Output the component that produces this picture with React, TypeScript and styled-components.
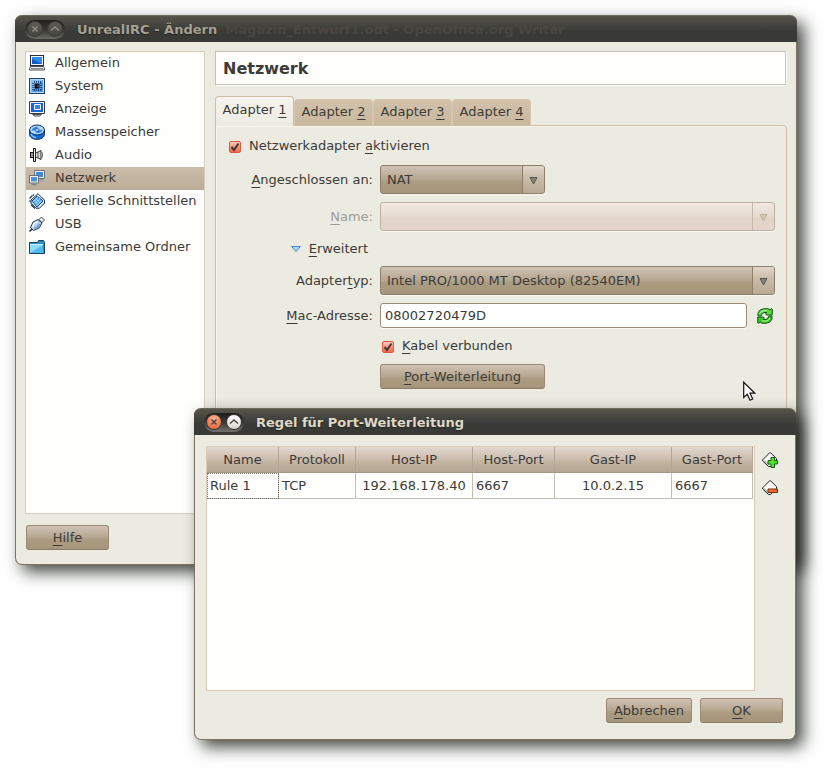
import React, { useState } from "react";
import styled, { createGlobalStyle, css } from "styled-components";

const GlobalStyle = createGlobalStyle`
  * { box-sizing: border-box; }
  body {
    margin: 0;
    background: #fdfefd;
    color: #3c3b37;
    font: 13px/19px "DejaVu Sans", "Liberation Sans", sans-serif;
  }
  button, input, select { font: inherit; color: inherit; margin: 0; }
`;

const raised = css`
  background: linear-gradient(#d0c3b4 0%, #c0b19f 30%, #b3a48e 52%, #ab9c82 56%, #a5957b 100%);
`;

const Desktop = styled.main`
  position: relative;
  min-height: 100vh;
  overflow: hidden;
  padding: 15px 31px 31px 15px;
`;

const WindowFrame = styled.section`
  border: 1px solid #7e7361;
  border-top: 0;
  border-radius: 7px;
  background: #ecebe2;
  box-shadow: 7px 7px 16px rgba(20, 24, 20, 0.78);
`;

const DialogFrame = styled(WindowFrame)`
  position: absolute;
  top: 408px;
  left: 194px;
  right: 32px;
`;

const TitleBar = styled.header<{ $active?: boolean }>`
  display: flex;
  align-items: center;
  height: 27px;
  margin: 0 -1px;
  padding: 0 10px;
  gap: 12px;
  overflow: hidden;
  white-space: nowrap;
  border-radius: 7px 7px 0 0;
  border-top: 1px solid #6c6a5d;
  background: linear-gradient(#55544b 0%, #3f403b 45%, #393a36 60%, #393a36 100%);
  color: ${(p) => (p.$active ? "#dfd8c8" : "#a3a095")};
`;

const Title = styled.h1`
  margin: 0;
  font-size: 13px;
  line-height: 19px;
  font-weight: bold;
  text-shadow: 0 1px 1px #24241f;
`;

const TitleGhost = styled.span`
  color: #4a4742;
  margin-left: 8px;
  text-shadow: none;
`;

const Caps = styled.div<{ $active?: boolean }>`
  display: flex;
  align-items: center;
  justify-content: space-between;
  width: 40px;
  height: 19px;
  padding: 0 2px;
  border-radius: 10px;
  background: ${(p) =>
    p.$active ? "linear-gradient(#1c1c1a, #3a3a37 50%, #70706c)" : "linear-gradient(#20201d, #363632 50%, #6a6a64)"};
`;

const CapButton = styled.button<{ $tone: "close" | "light" | "dim" }>`
  display: grid;
  place-items: center;
  width: 16px;
  height: 16px;
  padding: 0;
  border: 1px solid #3b3a36;
  border-radius: 50%;
  color: ${(p) => (p.$tone === "dim" ? "#8e8d86" : "#4c4841")};
  background: ${(p) =>
    p.$tone === "close"
      ? "radial-gradient(circle at 50% 25%, #f9b396, #f07a50 60%, #d96038)"
      : p.$tone === "light"
        ? "linear-gradient(#ffffff, #d6d3ca)"
        : "linear-gradient(#5d5c56, #45443f)"};
`;

const MainBody = styled.div`
  display: grid;
  grid-template-columns: 180px minmax(0, 1fr);
  column-gap: 10px;
  row-gap: 11px;
  padding: 9px 9px 14px;
`;

const Categories = styled.ul`
  margin: 0;
  padding: 0;
  min-height: 463px;
  list-style: none;
  background: #fefefd;
  border: 1px solid #d8cdb9;
`;

const Category = styled.button<{ $selected: boolean }>`
  display: flex;
  align-items: center;
  gap: 10px;
  width: 100%;
  height: 23px;
  padding: 0 3px 2px;
  border: 0;
  text-align: left;
  white-space: nowrap;
  background: ${(p) => (p.$selected ? "linear-gradient(#ccbdab, #c3b4a1 50%, #bcad99)" : "transparent")};
`;

const Settings = styled.div`
  display: flex;
  flex-direction: column;
`;

const Heading = styled.h2`
  margin: 0 1px 11px 0;
  padding: 2px 7px 0;
  font-size: 16px;
  line-height: 30px;
  font-weight: bold;
  background: #fefefd;
  border: 1px solid #c1c0b4;
  box-shadow: 1px 1px 0 #ffffff;
`;

const Tabs = styled.div`
  display: flex;
  align-items: flex-end;
  height: 29px;
`;

const Tab = styled.button<{ $selected: boolean }>`
  width: 79px;
  height: ${(p) => (p.$selected ? "30px" : "26px")};
  margin-bottom: ${(p) => (p.$selected ? "-1px" : "0")};
  padding: ${(p) => (p.$selected ? "0 0 4px" : "0 0 2px")};
  position: relative;
  white-space: nowrap;
  border: 1px solid ${(p) => (p.$selected ? "#cdbda4" : "#d6c7b1")};
  border-bottom: 0;
  border-radius: 4px 4px 0 0;
  background: ${(p) => (p.$selected ? "linear-gradient(#f7f3ee, #ecebe2)" : "linear-gradient(#d2c2ac, #c9b89e)")};
`;

const Panel = styled.div`
  display: flex;
  flex: 1;
  flex-direction: column;
  gap: 9px;
  padding: 10px 11px 11px 13px;
  border: 1px solid #cdbda4;
  border-radius: 0 4px 0 0;
  box-shadow: inset 1px 1px 0 #f8f6f0;
`;

const Form = styled.div`
  display: grid;
  grid-template-columns: 144px minmax(0, 1fr);
  column-gap: 7px;
  row-gap: 8px;
  align-items: center;
`;

const FieldLabel = styled.label<{ $disabled?: boolean }>`
  text-align: right;
  color: ${(p) => (p.$disabled ? "#a09c93" : "inherit")};
`;

const Key = styled.span`
  text-decoration: underline 1px;
  text-decoration-skip-ink: none;
  text-underline-offset: 3px;
`;

const SelectBox = styled.div<{ $disabled?: boolean; $short?: boolean }>`
  display: grid;
  grid-template-columns: minmax(0, 1fr) 22px;
  width: ${(p) => (p.$short ? "165px" : "100%")};
  height: 29px;
  border: 1px solid ${(p) => (p.$disabled ? "#bfb09f" : "#8d7e6a")};
  border-radius: 3px;
  overflow: hidden;
  box-shadow: 0 1px 0 #f8f7f2;
  ${raised}
  ${(p) => p.$disabled && "background: linear-gradient(#efe8e1, #e8ddd3 45%, #e2d6cb 55%, #e1d5c9);"}
`;

const Select = styled.select`
  grid-area: 1 / 1 / 2 / 3;
  appearance: none;
  border: 0;
  padding: 0 28px 0 6px;
  background: transparent;
`;

const SelectArrow = styled.span<{ $disabled?: boolean }>`
  grid-area: 1 / 2;
  display: grid;
  place-items: center;
  padding-top: 2px;
  pointer-events: none;
  border-left: 1px solid ${(p) => (p.$disabled ? "#c5b7a7" : "#8d7e6a")};
  background: ${(p) => (p.$disabled ? "transparent" : "linear-gradient(#e0d6cb, #c8bba9 45%, #b9aa95)")};
`;

const Disclosure = styled.button`
  display: flex;
  justify-content: flex-end;
  align-items: center;
  gap: 8px;
  height: 19px;
  padding: 0 5px 0 0;
  border: 0;
  background: none;
`;

const MacRow = styled.div`
  grid-column: 2;
  display: grid;
  grid-template-columns: minmax(0, 1fr) 20px;
  gap: 8px;
  align-items: center;
`;

const TextInput = styled.input`
  width: 100%;
  height: 25px;
  padding: 0 4px;
  background: #ffffff;
  border: 1px solid #9c8b74;
  border-radius: 3px;
  box-shadow: 0 1px 0 #f8f7f2;
`;

const ToolButton = styled.button<{ $size: number }>`
  display: grid;
  place-items: center;
  width: ${(p) => p.$size}px;
  height: ${(p) => p.$size}px;
  padding: 0;
  border: 0;
  background: none;
`;

const CheckLabel = styled.label<{ $field?: boolean }>`
  grid-column: ${(p) => (p.$field ? 2 : "auto")};
  display: flex;
  align-items: center;
  gap: 8px;
  height: 20px;
  padding-left: ${(p) => (p.$field ? "2px" : "0")};
  padding-bottom: 1px;
`;

const CheckMark = styled.span`
  display: grid;
  width: 12px;
  height: 12px;
  margin-top: 2px;
  > * { grid-area: 1 / 1; }
`;

const CheckInput = styled.input`
  appearance: none;
  width: 12px;
  height: 12px;
  border: 1px solid #e2593f;
  border-radius: 2px;
  background: linear-gradient(#fbc9ba, #f58a72 60%, #f2694d);
  &:not(:checked) { background: #ffffff; }
  &:not(:checked) + svg { visibility: hidden; }
`;

const PushButton = styled.button<{ $width: number }>`
  min-width: ${(p) => p.$width}px;
  height: 25px;
  padding: 0 6px;
  border: 1px solid #9a8975;
  border-bottom-color: #8b7c68;
  border-radius: 3px;
  justify-self: start;
  ${raised}
`;

const FieldButton = styled(PushButton)`
  grid-column: 2;
`;

const MainActions = styled.footer`
  grid-column: 1 / -1;
  display: flex;
  padding-left: 1px;
`;

const DialogBody = styled.div`
  display: grid;
  grid-template-columns: minmax(0, 1fr) 25px;
  column-gap: 3px;
  row-gap: 7px;
  padding: 11px 12px 16px 11px;
`;

const TableFrame = styled.div`
  min-height: 245px;
  padding-right: 1px;
  background: #fefefd;
  border: 1px solid #dccbb4;
`;

const RuleTable = styled.table`
  width: 100%;
  table-layout: fixed;
  border-collapse: separate;
  border-spacing: 0;
  white-space: nowrap;
`;

const HeadCell = styled.th`
  height: 26px;
  padding: 0;
  font-weight: normal;
  background: linear-gradient(#e2d8cf, #cdbfb1 45%, #c2b3a2 60%, #b6a694);
  border-right: 1px solid #b3a595;
  border-bottom: 1px solid #a59683;
`;

const Cell = styled.td<{ $center?: boolean; $focus?: boolean }>`
  height: 26px;
  padding: 0 3px 1px;
  text-align: ${(p) => (p.$center ? "center" : "left")};
  border-right: 1px solid #c1c0b4;
  border-bottom: 1px solid #c1c0b4;
  ${(p) => p.$focus && "outline: 1px dotted #77746c; outline-offset: -1px;"}
`;

const SideTools = styled.div`
  display: flex;
  flex-direction: column;
  gap: 4px;
  padding-top: 2px;
`;

const DialogActions = styled.footer`
  grid-column: 1 / -1;
  display: flex;
  justify-content: flex-end;
  gap: 8px;
`;

const Pointer = styled.svg`
  position: absolute;
  top: 381px;
  right: 72px;
  pointer-events: none;
`;

const Svg = ({ children }: { children: React.ReactNode }) => (
  <svg width="16" height="16" viewBox="0 0 16 16" aria-hidden="true">
    {children}
  </svg>
);

const GeneralIcon = () => (
  <Svg>
    <rect x="1.5" y=".5" width="13" height="10" fill="#f0f5fb" stroke="#26303c" />
    <rect x="3" y="2" width="10" height="7" fill="#2f8bec" />
    <path d="M3 9V4l10 5z" fill="#1059c4" />
    <path d="M1.500 11.500h13l1 2v1.500H.5v-1.500z" fill="#ececea" stroke="#4a4f55" />
    <path d="M2 13.500h12" stroke="#888" />
  </Svg>
);

const SystemIcon = () => (
  <Svg>
    <rect x=".5" y=".5" width="15" height="15" fill="#b4d8fa" stroke="#24405f" />
    <rect x="2" y="2" width="12" height="12" fill="#4c9bef" />
    <path d="M2 2h12L2 14z" fill="#86c0f8" />
    <rect x="5.500" y="5.500" width="5" height="5" fill="#0a101c" />
    <path d="M5 4h7M5 12h7M4 5v7M12 5v7" stroke="#0c2750" strokeWidth="1.300" strokeDasharray="1 1" />
    <path d="M8.500 7.500h1v1h-1z" fill="#e8f2ff" />
  </Svg>
);

const DisplayIcon = () => (
  <Svg>
    <path d="M.5.5h15v12H.5z" fill="#eef3f8" stroke="#333c46" />
    <rect x="2" y="2" width="12" height="9" fill="#1763cf" />
    <path d="M5.500 3.500h6v5h-6z" fill="#2f86ea" stroke="#f2f8ff" />
    <path d="M3.500 13.500h9l-2 1.500h-5z" fill="#cfcfcb" stroke="#50565c" />
  </Svg>
);

const StorageIcon = () => (
  <Svg>
    <path d="M.6 6v4.500c0 2.500 3.200 4.900 7.400 4.900s7.400-2.400 7.400-4.900V6z" fill="#146ad3" stroke="#0d2c58" />
    <path d="M2 10c1 2 3 3.500 5 3.800" stroke="#79c0f8" strokeWidth="1.500" fill="none" />
    <ellipse cx="8" cy="6" rx="7.400" ry="5" fill="#a8dafc" stroke="#0d2c58" />
    <path d="M2.500 7C3 4 6 2.500 9 2.800L8 5M13.500 5.500C13 8 11 9.500 7 9.300L8 7" fill="#2f86e3" />
    <ellipse cx="8" cy="6" rx="2.200" ry="1.300" fill="#f2faff" stroke="#1555a8" />
  </Svg>
);

const AudioIcon = () => (
  <Svg>
    <rect x="1.500" y="5.500" width="3" height="5" fill="#9a9a98" stroke="#1c1c1c" />
    <path d="M4.500 1.500h2v13h-2z" fill="#f2f2ee" stroke="#151515" />
    <path d="M6.500 6L9 5l3-1.500v9L9 11l-2.500-1z" fill="#d5d5d1" stroke="#343434" />
    <path d="M9 5v6" stroke="#5e5e5b" />
    <path d="M12.500 4.500c1.300 1.500 1.300 5.500 0 7" fill="none" stroke="#6b6b68" />
  </Svg>
);

const NetworkIcon = () => (
  <Svg>
    <path d="M5.500.5h10v8h-10z" fill="#f1f1ed" stroke="#6a7074" />
    <path d="M7 2h7v5H7z" fill="#3c8ae0" />
    <path d="M11 9.500h3v1.500h-3z" fill="#ddd" stroke="#7b7b78" strokeWidth=".7" />
    <path d="M.5 5.500h9v7.500h-9z" fill="#f5f5f2" stroke="#6a7074" />
    <path d="M2 7h6v4.500H2z" fill="#4c91dc" />
    <path d="M2.500 14.500h5" stroke="#85857f" strokeWidth="1.500" />
  </Svg>
);

const SerialIcon = () => (
  <Svg>
    <path d="M9 .7l6.500 6.500v3l-5 5H7l-5-5V7z" fill="#d9eefe" stroke="#152f4c" />
    <path d="M8 3l6 5-6 6-5-6z" fill="#5fb2f0" stroke="#114377" />
    <path d="M4 8.500L9 3.500M6 10.500L11 5.500M8 12.500L13 7.500" stroke="#e2f5ff" strokeDasharray="2 1" />
    <path d="M.5 5.500l3-3M.5 8.500l1-1M2 11.500l4 4M4 1.500l1 1" stroke="#1d3857" strokeWidth="1.300" />
  </Svg>
);

const UsbIcon = () => (
  <Svg>
    <path d="M10 3.500L12.500 1l3 3L13 6.500z" fill="#f4f4f2" stroke="#39424f" />
    <path d="M9 3.500L4 6 1.500 11.500l3 3L10 12l3-5z" fill="#b7ccf1" stroke="#26364f" />
    <path d="M8.500 5.500L5 7.500 3.500 11" stroke="#f3f8ff" strokeWidth="1.500" fill="none" />
    <path d="M10.500 8L8.500 11l-3 1.500" stroke="#6f95d8" strokeWidth="1.500" fill="none" />
    <path d="M3 13L.5 15.500" stroke="#26364f" strokeWidth="1.600" />
  </Svg>
);

const FolderIcon = () => (
  <Svg>
    <path d="M.5 3.500h8l1-2h5l1 2v11H.5z" fill="#2b8fc9" stroke="#17405e" />
    <path d="M1 5h13v9H1z" fill="#8fdbfa" />
    <path d="M1 14L14 6v8z" fill="#4fb8ec" />
    <path d="M1 5.500h13" stroke="#c8f0ff" />
  </Svg>
);

const RefreshIcon = () => (
  <Svg>
    <path
      d="M1 8V5l2-3 4-1.300h4L13 2l1-1.300 1.300.5V7H9.500L8.700 5.500 10 4.500H7L5 6 4 8z"
      fill="#58d83a"
      stroke="#14591a"
    />
    <path
      d="M15 8v3l-2 3-4 1.300H5L3 14l-1 1.300-1.300-.5V9h5.800l.8 1.500L6 11.500h3l2-1.500 1-2z"
      fill="#36c81c"
      stroke="#14591a"
    />
    <path d="M2.500 5.500L5 3l5-.7M5 13h5l3-2.500" stroke="#c6f7b4" fill="none" />
  </Svg>
);

const RuleIcon = ({ kind }: { kind: "add" | "remove" }) => (
  <Svg>
    <path d="M8.500.7L14.500 6.700v2L8.500 14.500H6.500L.7 9V7.800L7.700.7z" fill="#fafaf8" stroke="#1d1d1b" />
    <path d="M2 8.500L7 13" stroke="#b5b5b0" strokeWidth="1.500" />
    {kind === "add" ? (
      <path d="M9 5.500h3.500v3h3V12h-3v3.500H9V12H6V8.500h3z" fill="#4fe32b" stroke="#125d10" />
    ) : (
      <path d="M6 9h9.500v3.500H6z" fill="#f4682f" stroke="#7c2a12" />
    )}
  </Svg>
);

const CloseGlyph = () => (
  <svg width="8" height="8" viewBox="0 0 8 8" aria-hidden="true">
    <path d="M1.500 1.500l5 5M6.500 1.500l-5 5" stroke="currentColor" strokeWidth="1.500" />
  </svg>
);

const UpGlyph = () => (
  <svg width="10" height="8" viewBox="0 0 10 8" aria-hidden="true">
    <path d="M1 5.500L5 2l4 3.500" fill="none" stroke="currentColor" strokeWidth="1.500" />
  </svg>
);

const WindowCaps = ({ active }: { active?: boolean }) => (
  <Caps $active={active}>
    <CapButton $tone={active ? "close" : "dim"} aria-label="Schließen">
      <CloseGlyph />
    </CapButton>
    <CapButton $tone={active ? "light" : "dim"} aria-label="Einrollen">
      <UpGlyph />
    </CapButton>
  </Caps>
);

type DropDownProps = { id: string; options: string[]; disabled?: boolean; short?: boolean };

const DropDown = ({ id, options, disabled, short }: DropDownProps) => (
  <SelectBox $disabled={disabled} $short={short}>
    <Select id={id} disabled={disabled}>
      {options.map((o) => (
        <option key={o}>{o}</option>
      ))}
    </Select>
    <SelectArrow $disabled={disabled}>
      <svg width="9" height="9" viewBox="0 0 9 9" aria-hidden="true">
        <path
          d="M1 1.500h7L4.500 8z"
          fill={disabled ? "#d5c9b4" : "#85827a"}
          stroke={disabled ? "#bcae98" : "#55534c"}
        />
      </svg>
    </SelectArrow>
  </SelectBox>
);

const CheckBox = ({ field, children }: { field?: boolean; children: React.ReactNode }) => (
  <CheckLabel $field={field}>
    <CheckMark>
      <CheckInput type="checkbox" defaultChecked />
      <svg width="12" height="12" viewBox="0 0 12 12" pointerEvents="none" aria-hidden="true">
        <path d="M2.500 6l2.500 3 4.500-6.500" fill="none" stroke="#403a35" strokeWidth="2" />
      </svg>
    </CheckMark>
    <span>{children}</span>
  </CheckLabel>
);

const categories = [
  { name: "Allgemein", Icon: GeneralIcon },
  { name: "System", Icon: SystemIcon },
  { name: "Anzeige", Icon: DisplayIcon },
  { name: "Massenspeicher", Icon: StorageIcon },
  { name: "Audio", Icon: AudioIcon },
  { name: "Netzwerk", Icon: NetworkIcon },
  { name: "Serielle Schnittstellen", Icon: SerialIcon },
  { name: "USB", Icon: UsbIcon },
  { name: "Gemeinsame Ordner", Icon: FolderIcon },
];

const columns = [
  { name: "Name", width: 72, value: "Rule 1" },
  { name: "Protokoll", width: 77, value: "TCP" },
  { name: "Host-IP", width: 117, value: "192.168.178.40", center: true },
  { name: "Host-Port", width: 82, value: "6667" },
  { name: "Gast-IP", width: 117, value: "10.0.2.15", center: true },
  { name: "Gast-Port", width: 81, value: "6667" },
];

export default function App() {
  const [category, setCategory] = useState("Netzwerk");
  const [adapter, setAdapter] = useState(1);

  return (
    <>
      <GlobalStyle />
      <Desktop>
        <WindowFrame>
          <TitleBar>
            <WindowCaps />
            <Title>
              UnrealIRC - Ändern
              <TitleGhost>Magazin_Entwurf1.odt - OpenOffice.org Writer</TitleGhost>
            </Title>
          </TitleBar>
          <MainBody>
            <Categories>
              {categories.map(({ name, Icon }) => (
                <li key={name}>
                  <Category $selected={name === category} onClick={() => setCategory(name)}>
                    <Icon />
                    {name}
                  </Category>
                </li>
              ))}
            </Categories>
            <Settings>
              <Heading>{category}</Heading>
              <Tabs role="tablist">
                {[1, 2, 3, 4].map((n) => (
                  <Tab
                    key={n}
                    role="tab"
                    aria-selected={n === adapter}
                    $selected={n === adapter}
                    onClick={() => setAdapter(n)}
                  >
                    Adapter <Key>{n}</Key>
                  </Tab>
                ))}
              </Tabs>
              <Panel role="tabpanel">
                <CheckBox>
                  Netzwerkadapter <Key>a</Key>ktivieren
                </CheckBox>
                <Form>
                  <FieldLabel htmlFor="attached">
                    <Key>A</Key>ngeschlossen an:
                  </FieldLabel>
                  <DropDown id="attached" options={["NAT"]} short />
                  <FieldLabel htmlFor="netname" $disabled>
                    <Key>N</Key>ame:
                  </FieldLabel>
                  <DropDown id="netname" options={[]} disabled />
                  <Disclosure aria-expanded="true">
                    <svg width="10" height="6" viewBox="0 0 10 6" aria-hidden="true">
                      <path d="M.5.5h9L5 5.500z" fill="#a9d5fb" stroke="#4c86c4" />
                    </svg>
                    <span>
                      <Key>E</Key>rweitert
                    </span>
                  </Disclosure>
                  <span />
                  <FieldLabel htmlFor="adaptertype">
                    Adapter<Key>t</Key>yp:
                  </FieldLabel>
                  <DropDown id="adaptertype" options={["Intel PRO/1000 MT Desktop (82540EM)"]} />
                  <FieldLabel htmlFor="mac">
                    <Key>M</Key>ac-Adresse:
                  </FieldLabel>
                  <MacRow>
                    <TextInput id="mac" defaultValue="08002720479D" />
                    <ToolButton $size={20} aria-label="Neue Mac-Adresse">
                      <RefreshIcon />
                    </ToolButton>
                  </MacRow>
                  <CheckBox field>
                    <Key>K</Key>abel verbunden
                  </CheckBox>
                  <FieldButton $width={165}>
                    <Key>P</Key>ort-Weiterleitung
                  </FieldButton>
                </Form>
              </Panel>
            </Settings>
            <MainActions>
              <PushButton $width={83}>
                <Key>H</Key>ilfe
              </PushButton>
            </MainActions>
          </MainBody>
        </WindowFrame>

        <Pointer width="13" height="21" viewBox="0 0 13 21" aria-hidden="true">
          <path d="M.7 1.200v15.300l3.600-3.300 2.700 6 2.700-1.200-2.700-5.800h4.900z" fill="#fff" stroke="#111" strokeWidth="1.200" />
        </Pointer>

        <DialogFrame role="dialog" aria-labelledby="rule-title">
          <TitleBar $active>
            <WindowCaps active />
            <Title id="rule-title">Regel für Port-Weiterleitung</Title>
          </TitleBar>
          <DialogBody>
            <TableFrame>
              <RuleTable>
                <colgroup>
                  {columns.map((c) => (
                    <col key={c.name} width={c.width} />
                  ))}
                </colgroup>
                <thead>
                  <tr>
                    {columns.map((c) => (
                      <HeadCell key={c.name}>{c.name}</HeadCell>
                    ))}
                  </tr>
                </thead>
                <tbody>
                  <tr>
                    {columns.map((c, i) => (
                      <Cell key={c.name} $center={c.center} $focus={i === 0}>
                        {c.value}
                      </Cell>
                    ))}
                  </tr>
                </tbody>
              </RuleTable>
            </TableFrame>
            <SideTools>
              <ToolButton $size={24} aria-label="Regel hinzufügen">
                <RuleIcon kind="add" />
              </ToolButton>
              <ToolButton $size={24} aria-label="Regel entfernen">
                <RuleIcon kind="remove" />
              </ToolButton>
            </SideTools>
            <DialogActions>
              <PushButton $width={86}>
                <Key>A</Key>bbrechen
              </PushButton>
              <PushButton $width={83}>
                <Key>O</Key>K
              </PushButton>
            </DialogActions>
          </DialogBody>
        </DialogFrame>
      </Desktop>
    </>
  );
}
